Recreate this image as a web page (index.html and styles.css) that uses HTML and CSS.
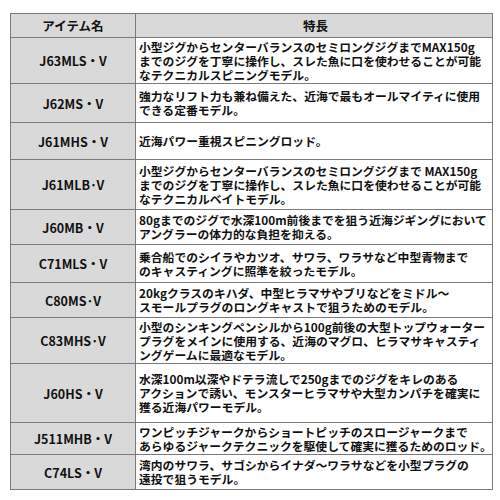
FILE: index.html
```html
<!DOCTYPE html>
<html lang="ja">
<head>
<meta charset="utf-8">
<link rel="stylesheet" href="styles.css">
</head>
<body>
<table class="spec">
  <tr class="head h24"><th class="name">アイテム名</th><th class="feat">特長</th></tr>
  <tr class="h46"><td class="name">J63MLS・V</td><td class="feat">小型ジグからセンターバランスのセミロングジグまでMAX150g<br>までのジグを丁寧に操作し、スレた魚に口を使わせることが可能<br>なテクニカルスピニングモデル。</td></tr>
  <tr class="h39"><td class="name">J62MS・V</td><td class="feat">強力なリフト力も兼ね備えた、近海で最もオールマイティに使用<br>できる定番モデル。</td></tr>
  <tr class="h37"><td class="name">J61MHS・V</td><td class="feat">近海パワー重視スピニングロッド。</td></tr>
  <tr class="h50"><td class="name">J61MLB·V</td><td class="feat">小型ジグからセンターバランスのセミロングジグまで MAX150g<br>までのジグを丁寧に操作し、スレた魚に口を使わせることが可能<br>なテクニカルベイトモデル。</td></tr>
  <tr class="h35"><td class="name">J60MB・V</td><td class="feat">80gまでのジグで水深100m前後までを狙う近海ジギングにおいて<br>アングラーの体力的な負担を抑える。</td></tr>
  <tr class="h38"><td class="name">C71MLS・V</td><td class="feat">乗合船でのシイラやカツオ、サワラ、ワラサなど中型青物まで<br>のキャスティングに照準を絞ったモデル。</td></tr>
  <tr class="h35"><td class="name">C80MS·V</td><td class="feat">20kgクラスのキハダ、中型ヒラマサやブリなどをミドル～<br>スモールプラグのロングキャストで狙うためのモデル。</td></tr>
  <tr class="h46"><td class="name">C83MHS·V</td><td class="feat">小型のシンキングペンシルから100g前後の大型トップウォーター<br>プラグをメインに使用する、近海のマグロ、ヒラマサキャスティ<br>ングゲームに最適なモデル。</td></tr>
  <tr class="h59"><td class="name">J60HS・V</td><td class="feat">水深100m以深やドテラ流しで250gまでのジグをキレのある<br>アクションで誘い、モンスターヒラマサや大型カンパチを確実に<br>獲る近海パワーモデル。</td></tr>
  <tr class="h32"><td class="name">J511MHB・V</td><td class="feat">ワンピッチジャークからショートピッチのスロージャークまで<br>あらゆるジャークテクニックを駆使して確実に獲るためのロッド。</td></tr>
  <tr class="h35"><td class="name">C74LS・V</td><td class="feat">湾内のサワラ、サゴシからイナダ～ワラサなどを小型プラグの<br>遠投で狙うモデル。</td></tr>
</table>
</body>
</html>
```
FILE: styles.css
```css
html, body {
  margin: 0;
  padding: 0;
  background: #ffffff;
}
body {
  font-family: "Noto Sans CJK JP", "Noto Sans", sans-serif;
  color: #111111;
}
.spec {
  margin: 13px 0 0 10px;
  border-collapse: collapse;
  width: 483px;
  table-layout: fixed;
}
.spec th, .spec td {
  border: 1px solid #7a7a7a;
  padding: 0;
  vertical-align: middle;
}
.spec .name {
  width: 124px;
  background: #d9d9d9;
  text-align: center;
  font-weight: 700;
  font-size: 12.5px;
}
.spec .feat {
  background: #ffffff;
  text-align: left;
  font-weight: 700;
  font-size: 11.8px;
  line-height: 14px;
  padding-left: 3px;
  white-space: nowrap;
  overflow: hidden;
}
.spec .feat .tight {
  letter-spacing: -0.2px;
}
.spec .head th {
  background: #d9d9d9;
  text-align: center;
  font-size: 12.5px;
  font-weight: 700;
}
.h24 { height: 24px; }
.h32 { height: 32px; }
.h35 { height: 35px; }
.h37 { height: 37px; }
.h38 { height: 38px; }
.h39 { height: 39px; }
.h46 { height: 46px; }
.h50 { height: 50px; }
.h59 { height: 59px; }
```
